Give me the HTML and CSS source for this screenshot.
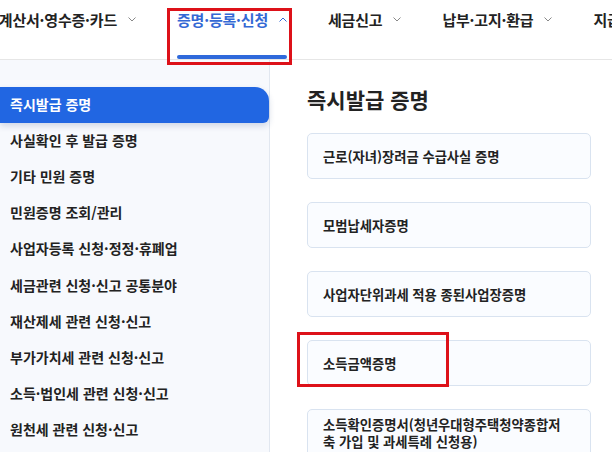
FILE: index.html
```html
<!DOCTYPE html>
<html lang="ko">
<head>
    <meta charset="UTF-8">
    <meta name="viewport" content="width=device-width, initial-scale=1.0">
    <title>증명·등록·신청 - 즉시발급 증명</title>
    <link rel="stylesheet" href="styles.css">
</head>
<body>
    <header class="gnb">
        <div class="gnb-item cut">
            <div class="gnb-label">세금계산서·영수증·카드 <svg class="chev" viewBox="0 0 8 5"><path d="M0.5 0.5 L4 4 L7.5 0.5"/></svg></div>
        </div>
        <div class="gnb-item on">
            <div class="gnb-label">증명·등록·신청 <svg class="chev" viewBox="0 0 8 5"><path d="M0.5 4.5 L4 1 L7.5 4.5"/></svg></div>
            <div class="gnb-bar"></div>
        </div>
        <div class="gnb-item">
            <div class="gnb-label">세금신고 <svg class="chev" viewBox="0 0 8 5"><path d="M0.5 0.5 L4 4 L7.5 0.5"/></svg></div>
        </div>
        <div class="gnb-item">
            <div class="gnb-label">납부·고지·환급 <svg class="chev" viewBox="0 0 8 5"><path d="M0.5 0.5 L4 4 L7.5 0.5"/></svg></div>
        </div>
        <div class="gnb-item">
            <div class="gnb-label">지급명세·자료제출·공익법인</div>
        </div>
    </header>

    <div class="wrap">
        <nav class="snb">
            <a class="snb-item active">즉시발급 증명</a>
            <a class="snb-item">사실확인 후 발급 증명</a>
            <a class="snb-item">기타 민원 증명</a>
            <a class="snb-item">민원증명 조회/관리</a>
            <a class="snb-item">사업자등록 신청·정정·휴폐업</a>
            <a class="snb-item">세금관련 신청·신고 공통분야</a>
            <a class="snb-item">재산제세 관련 신청·신고</a>
            <a class="snb-item">부가가치세 관련 신청·신고</a>
            <a class="snb-item">소득·법인세 관련 신청·신고</a>
            <a class="snb-item">원천세 관련 신청·신고</a>
        </nav>

        <main class="content">
            <h2 class="title">즉시발급 증명</h2>
            <ul class="card-list">
                <li class="card">근로(자녀)장려금 수급사실 증명</li>
                <li class="card">모범납세자증명</li>
                <li class="card">사업자단위과세 적용 종된사업장증명</li>
                <li class="card">소득금액증명</li>
                <li class="card">소득확인증명서(청년우대형주택청약종합저축 가입 및 과세특례 신청용)</li>
            </ul>
        </main>
    </div>

    <!-- 강조 표시 -->
    <div class="mark mark-menu"></div>
    <div class="mark mark-card"></div>
</body>
</html>
```

FILE: styles.css
```css
* {
    box-sizing: border-box;
}
body {
    margin: 0;
    font-family: "Noto Sans CJK KR", "Noto Sans", sans-serif;
    color: #222;
    background: #fff;
    overflow: hidden;
}
.gnb {
    display: flex;
    gap: 41px;
    height: 60px;
    border-bottom: 1px solid #e6e6e6;
    white-space: nowrap;
    overflow: hidden;
}
.gnb-item {
    display: flex;
    flex-direction: column;
    flex-shrink: 0;
}
.gnb-item.cut {
    width: 136px;
    align-items: flex-end;
    overflow: hidden;
}
.gnb-label {
    display: flex;
    align-items: center;
    gap: 11px;
    height: 20px;
    margin-top: 9px;
    font-size: 15px;
    font-weight: 700;
    letter-spacing: -0.2px;
}
.chev {
    width: 8px;
    height: 5px;
    fill: none;
    stroke: #888;
    stroke-width: 1;
}
.gnb-item.on .gnb-label {
    color: #3468d4;
}
.gnb-item.on .chev {
    stroke: #3468d4;
}
.gnb-bar {
    margin-top: auto;
    height: 4px;
    border-radius: 2px;
    background: #2f69db;
}
.wrap {
    display: flex;
    height: 392px;
}
.snb {
    width: 270px;
    flex-shrink: 0;
    padding-top: 27px;
    background: #f7f9fd;
    border-right: 1px solid #e1e7f0;
    display: flex;
    flex-direction: column;
}
.snb-item {
    display: flex;
    align-items: center;
    height: 36.2px;
    padding: 0 0 3px 10px;
    font-size: 14px;
    font-weight: 600;
    color: #222;
}
.snb-item.active {
    width: 269px;
    background: #2166e2;
    color: #fff;
    font-weight: 700;
    border-radius: 0 14px 6px 0;
    box-shadow: 0 3px 6px rgba(30, 60, 120, 0.18);
}
.content {
    flex: 1;
    padding: 26px 21px 0 37px;
}
.title {
    margin: 0 0 21px;
    font-size: 21px;
    line-height: 26px;
    font-weight: 700;
}
.card-list {
    list-style: none;
    margin: 0;
    padding: 0;
}
.card {
    display: flex;
    align-items: center;
    min-height: 46px;
    margin-bottom: 23px;
    padding: 6px 20px 6px 15px;
    background: #fafcff;
    border: 1px solid #d9e3f0;
    border-radius: 5px;
    font-size: 13.3px;
    line-height: 17px;
    font-weight: 600;
}
.mark {
    position: absolute;
    border: 3px solid #dd1119;
}
.mark-menu {
    left: 167px;
    top: 8px;
    width: 125px;
    height: 57px;
}
.mark-card {
    left: 297px;
    top: 332px;
    width: 152px;
    height: 55px;
}
```
